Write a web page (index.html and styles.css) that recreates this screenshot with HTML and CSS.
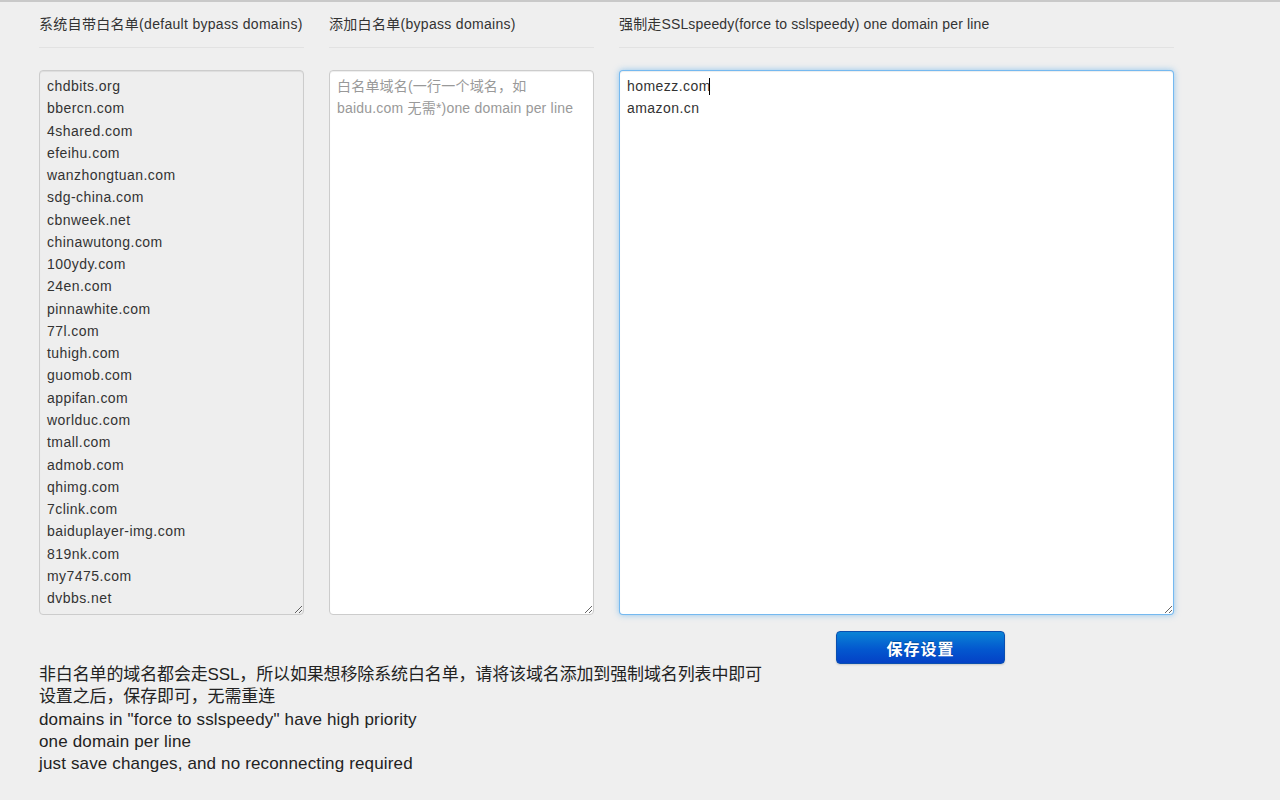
FILE: index.html
```
<!DOCTYPE html>
<html lang="zh-CN">
<head>
<meta charset="utf-8">
<title>白名单设置</title>
<link rel="stylesheet" href="styles.css">
</head>
<body>
<div class="page">
  <div class="columns">
    <div class="col col-narrow">
      <div class="legend">系统自带白名单(default bypass domains)</div>
      <textarea class="box box-readonly" readonly>chdbits.org
bbercn.com
4shared.com
efeihu.com
wanzhongtuan.com
sdg-china.com
cbnweek.net
chinawutong.com
100ydy.com
24en.com
pinnawhite.com
77l.com
tuhigh.com
guomob.com
appifan.com
worlduc.com
tmall.com
admob.com
qhimg.com
7clink.com
baiduplayer-img.com
819nk.com
my7475.com
dvbbs.net</textarea>
    </div>
    <div class="col col-narrow">
      <div class="legend">添加白名单(bypass domains)</div>
      <textarea class="box box-placeholder" placeholder="白名单域名(一行一个域名，如baidu.com 无需*)one domain per line"></textarea>
    </div>
    <div class="col col-wide">
      <div class="legend legend-wide">强制走SSLspeedy(force to sslspeedy) one domain per line</div>
      <div class="box-wrap">
        <textarea class="box box-focus">homezz.com
amazon.cn</textarea>
        <span class="caret"></span>
      </div>
    </div>
  </div>
  <div class="actions">
    <button class="btn-save" type="button">保存设置</button>
  </div>
  <div class="notes">
    <div class="cjk">非白名单的域名都会走SSL，所以如果想移除系统白名单，请将该域名添加到强制域名列表中即可</div>
    <div class="cjk">设置之后，保存即可，无需重连</div>
    <div class="en">domains in "force to sslspeedy" have high priority</div>
    <div class="en">one domain per line</div>
    <div class="en">just save changes, and no reconnecting required</div>
  </div>
</div>
</body>
</html>
```
FILE: styles.css
```
html, body {
  margin: 0;
  padding: 0;
}
body {
  background: #efefef;
  border-top: 2px solid #c9c9c9;
  font-family: "Liberation Sans", Arial, "Noto Sans CJK SC", sans-serif;
  color: #333;
  min-height: 798px;
}
.page {
  padding-left: 39px;
}
.columns {
  display: flex;
  gap: 25px;
}
.col-narrow {
  width: 265px;
}
.col-wide {
  width: 555px;
}
.legend {
  font-size: 14px;
  letter-spacing: 0.3px;
  line-height: 20px;
  padding-top: 12px;
  padding-bottom: 13px;
  border-bottom: 1px solid #e2e2e2;
  color: #333;
  white-space: nowrap;
}
.legend-wide {
  letter-spacing: 0.15px;
}
.box-wrap {
  position: relative;
  margin-top: 22px;
}
.box {
  display: block;
  box-sizing: border-box;
  width: 100%;
  height: 545px;
  margin: 22px 0 0 0;
  padding: 4px 7px;
  font-family: "Liberation Sans", Arial, "Noto Sans CJK SC", sans-serif;
  font-size: 14px;
  letter-spacing: 0.45px;
  line-height: 22.26px;
  color: #333;
  background: #fff;
  border: 1px solid #cccccc;
  border-radius: 4px;
  box-shadow: inset 0 1px 1px rgba(0,0,0,0.075);
  overflow: hidden;
  resize: both;
  outline: none;
}
.box::placeholder {
  color: #999;
}
.box-placeholder {
  letter-spacing: 0.2px;
}
.box-readonly {
  background: #eeeeee;
}
.box-wrap .box {
  margin-top: 0;
}
.box-focus {
  border-color: rgba(82,168,236,0.8);
  box-shadow: inset 0 1px 1px rgba(0,0,0,0.075), 0 0 6px rgba(82,168,236,0.6);
}
.caret {
  position: absolute;
  left: 90px;
  top: 8px;
  width: 1px;
  height: 17px;
  background: #000;
}
.actions {
  padding-left: 797px;
  margin-top: 16px;
}
.btn-save {
  display: block;
  width: 169px;
  height: 33px;
  padding: 0;
  border: 1px solid #0a4fb0;
  border-radius: 4px;
  background: linear-gradient(to bottom, #0a84d6 0%, #0358cf 55%, #0441c6 100%);
  color: #fff;
  font-family: "Noto Sans CJK SC", sans-serif;
  font-size: 16px;
  font-weight: bold;
  letter-spacing: 1px;
  text-shadow: 0 -1px 0 rgba(0,0,0,0.25);
  box-shadow: 0 1px 2px rgba(0,0,0,0.15);
  cursor: pointer;
}
.notes {
  font-size: 17px;
  line-height: 22.3px;
  color: #222;
}
.notes .cjk {
  letter-spacing: -0.14px;
}
.notes .en {
  letter-spacing: 0.15px;
}
```
